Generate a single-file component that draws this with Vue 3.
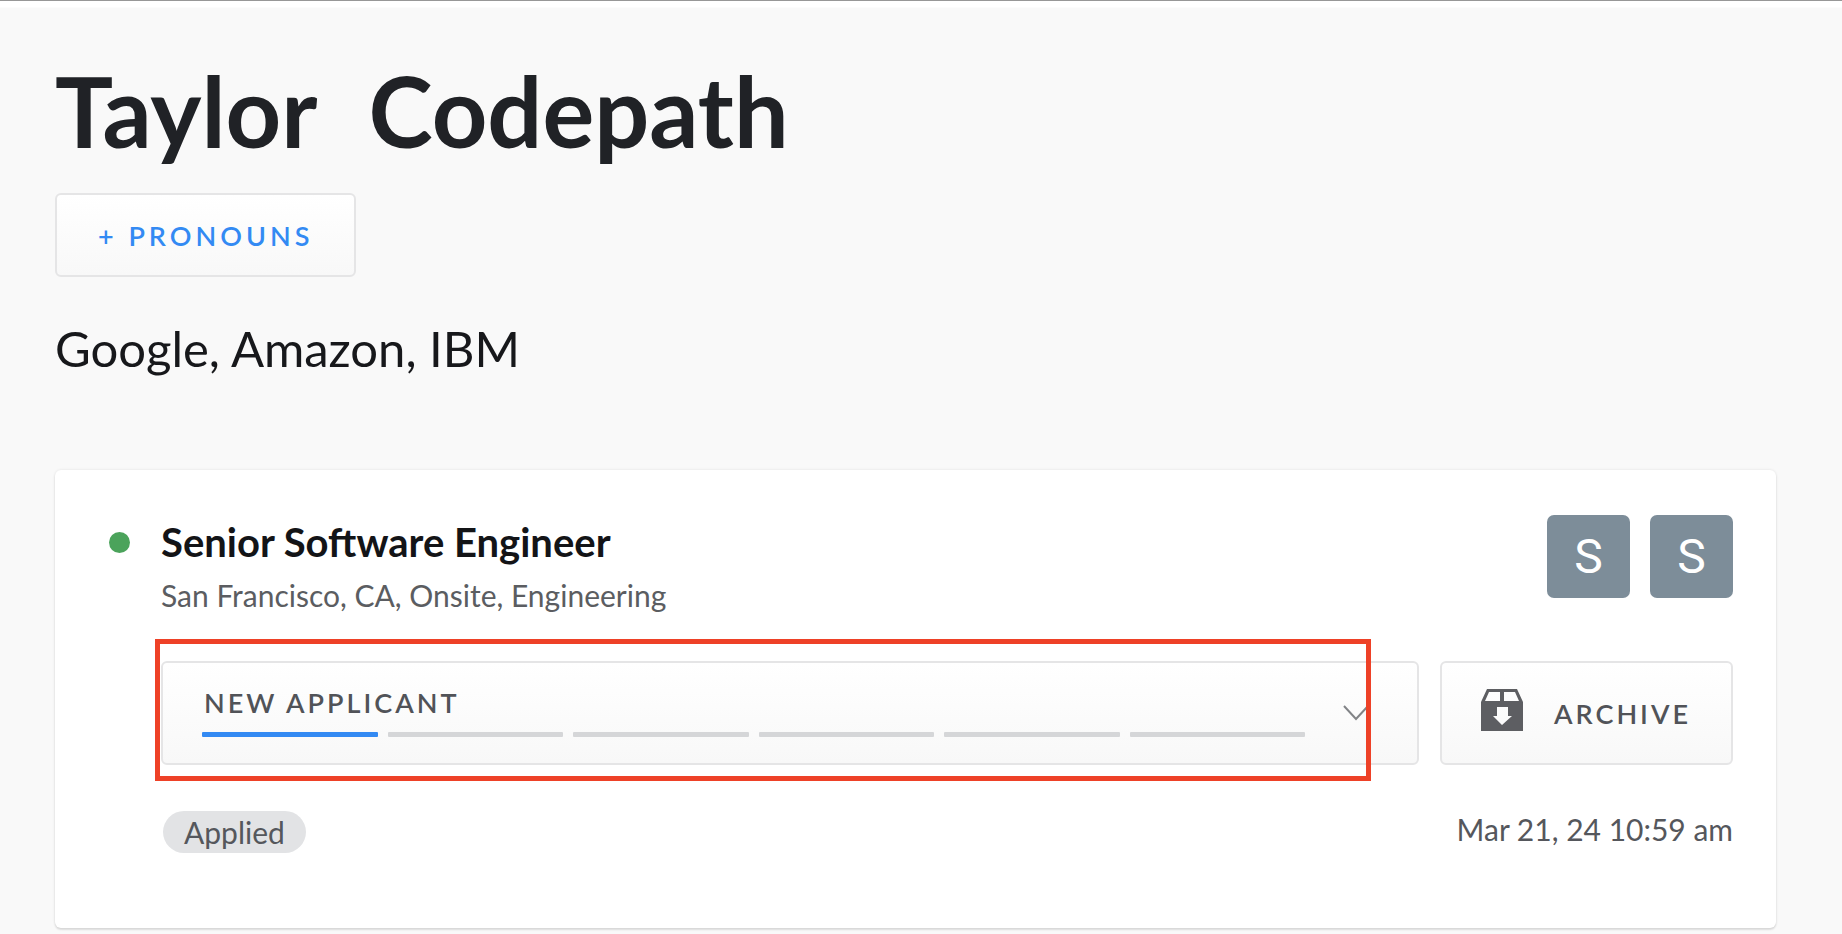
<script setup>
import { ref, computed } from 'vue'

const stages = ['New applicant', 'Recruiter screen', 'Phone interview', 'Onsite interview', 'Reference check', 'Offer']
const stage = ref(stages[0])
const reached = computed(() => stages.indexOf(stage.value))
const owners = ['S', 'S']
</script>

<template>
  <main class="page">
    <h1 class="name"><span>Taylor</span><span>Codepath</span></h1>
    <button type="button" class="button pronouns">+ Pronouns</button>
    <p class="companies">Google, Amazon, IBM</p>

    <section class="card">
      <span class="dot"></span>
      <div class="body">
        <header class="head">
          <div>
            <h2 class="role">Senior Software Engineer</h2>
            <p class="place">San Francisco, CA, Onsite, Engineering</p>
          </div>
          <div class="owners">
            <span v-for="(o, i) in owners" :key="i" class="avatar">{{ o }}</span>
          </div>
        </header>

        <div class="actions">
          <div class="button stage">
            <div class="progress">
              <select v-model="stage" class="picker" aria-label="Stage">
                <option v-for="s in stages" :key="s" :value="s">{{ s }}</option>
              </select>
              <div class="steps">
                <span v-for="(s, i) in stages" :key="s" class="step" :class="{ done: i <= reached }"></span>
              </div>
            </div>
            <svg class="chevron" viewBox="0 0 28 18" aria-hidden="true">
              <path d="M2 2 L14 15 L26 2" fill="none" stroke="#828487" stroke-width="2" />
            </svg>
            <span class="highlight"></span>
          </div>
          <button type="button" class="button archive">
            <svg class="box" viewBox="0 0 42 42" aria-hidden="true">
              <path fill="#5d5e62" fill-rule="evenodd" d="M6 0H36L42 13V42H0V13ZM8 3L4 12H19V3ZM23 3V12H38L34 3ZM16 18V27H12L21 36L31 27H27V18Z" />
            </svg>
            Archive
          </button>
        </div>

        <footer class="foot">
          <span class="tag">Applied</span>
          <time class="date" datetime="2024-03-21T10:59">Mar 21, 24 10:59 am</time>
        </footer>
      </div>
    </section>
  </main>
</template>

<style>
html {
  background: #f9f9f9;
}
</style>

<style scoped>
.page {
  box-sizing: border-box;
  padding: 50px 66px 6px 55px;
  border-top: 1px solid #979797;
  background: linear-gradient(#fff 6px, #f9f9f9 7px);
  color: #202226;
  font-family: Lato, "Open Sans", sans-serif;
}
h1, h2, p {
  margin: 0;
}
.name {
  display: flex;
  gap: 51px;
  font-size: 97px;
  line-height: 120px;
  font-weight: 700;
}
.button {
  box-sizing: border-box;
  border: 2px solid #e5e5e6;
  border-radius: 6px;
  background: linear-gradient(#fff, #f8f8f8);
  color: #515358;
  font-family: inherit;
  font-size: 27px;
  font-weight: 600;
  letter-spacing: 3px;
  text-transform: uppercase;
}
.pronouns {
  display: block;
  height: 84px;
  margin-top: 22px;
  padding: 0 41px;
  color: #338af3;
  letter-spacing: 4px;
}
.companies {
  margin-top: 41px;
  color: #17181b;
  font-size: 49px;
  line-height: 60px;
}
.card {
  display: flex;
  gap: 31px;
  margin-top: 92px;
  padding: 45px 43px 72px 54px;
  border-radius: 6px;
  background: #fff;
  box-shadow: 0 0 3px rgba(0, 0, 0, 0.1), 0 2px 2px rgba(0, 0, 0, 0.1);
}
.dot {
  flex: none;
  width: 21px;
  height: 21px;
  margin-top: 17px;
  border-radius: 50%;
  background: #4ba35b;
}
.body {
  flex: 1;
}
.head {
  display: flex;
  justify-content: space-between;
}
.role {
  color: #131417;
  font-size: 40px;
  line-height: 54px;
  font-weight: 700;
}
.place {
  color: #5b5d61;
  font-size: 30px;
  line-height: 52px;
}
.owners {
  display: flex;
  gap: 20px;
}
.avatar {
  width: 83px;
  height: 83px;
  border-radius: 7px;
  background: #7d8d99;
  color: #fff;
  font: 400 48px/84px Roboto, sans-serif;
  text-align: center;
}
.actions {
  display: flex;
  gap: 21px;
  margin-top: 40px;
}
.stage {
  position: relative;
  display: flex;
  flex: 1;
  align-items: center;
  height: 104px;
  padding: 0 47px 0 39px;
}
.progress {
  flex: 1;
  margin: 0 37px 4px 0;
}
.picker {
  display: block;
  width: 100%;
  height: 34px;
  margin: 0 0 13px;
  padding: 0 2px;
  border: 0;
  appearance: none;
  background: none;
  color: inherit;
  font: inherit;
  letter-spacing: inherit;
  text-transform: inherit;
}
.steps {
  display: flex;
  gap: 10px;
}
.step {
  flex: 1;
  height: 5px;
  border-radius: 1px;
  background: #d5d6d8;
}
.step.done {
  background: #338af3;
}
.chevron {
  width: 28px;
  height: 18px;
}
.highlight {
  position: absolute;
  inset: -24px 46px -18px -8px;
  border: 5px solid #ee4127;
  pointer-events: none;
}
.archive {
  display: flex;
  align-items: center;
  gap: 31px;
  padding: 0 40px 0 39px;
}
.box {
  width: 42px;
  height: 42px;
  margin-bottom: 6px;
}
.foot {
  display: flex;
  align-items: center;
  justify-content: space-between;
  margin-top: 43px;
  color: #55575c;
  font-size: 30px;
  line-height: 42px;
}
.tag {
  margin-left: 2px;
  padding: 0 21px;
  border-radius: 21px;
  background: #e2e3e5;
}
.date {
  margin-bottom: 6px;
}
</style>
